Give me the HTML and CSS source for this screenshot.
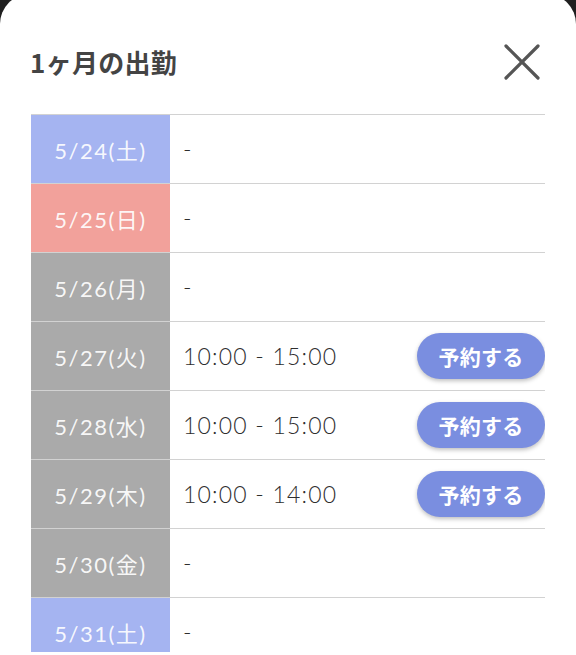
FILE: index.html
```html
<!DOCTYPE html>
<html lang="ja">
<head>
<meta charset="utf-8">
<link rel="stylesheet" href="styles.css">
</head>
<body>
<div class="panel">
  <div class="header">
    <h1 class="title">1ヶ月の出勤</h1>
    <svg class="close" width="40" height="40" viewBox="0 0 40 40" aria-label="閉じる">
      <path d="M4 4 L36 36 M36 4 L4 36" stroke="#555" stroke-width="3.2" stroke-linecap="round" fill="none"/>
    </svg>
  </div>
  <div class="list">
    <div class="row"><div class="date sat">5/24(土)</div><div class="info"><span class="time">-</span></div></div>
    <div class="row"><div class="date sun">5/25(日)</div><div class="info"><span class="time">-</span></div></div>
    <div class="row"><div class="date">5/26(月)</div><div class="info"><span class="time">-</span></div></div>
    <div class="row"><div class="date">5/27(火)</div><div class="info"><span class="time">10:00 - 15:00</span><button class="reserve">予約する</button></div></div>
    <div class="row"><div class="date">5/28(水)</div><div class="info"><span class="time">10:00 - 15:00</span><button class="reserve">予約する</button></div></div>
    <div class="row"><div class="date">5/29(木)</div><div class="info"><span class="time">10:00 - 14:00</span><button class="reserve">予約する</button></div></div>
    <div class="row"><div class="date">5/30(金)</div><div class="info"><span class="time">-</span></div></div>
    <div class="row"><div class="date sat">5/31(土)</div><div class="info"><span class="time">-</span></div></div>
  </div>
</div>
</body>
</html>
```
FILE: styles.css
```css
html, body {
  margin: 0;
  padding: 0;
  background: #1f1f1f;
  height: 655px;
  overflow: hidden;
}
.panel {
  margin-top: -6px;
  height: 661px;
  background: #fff;
  border-radius: 30px 30px 0 0;
  padding: 0 31px;
  box-sizing: border-box;
  font-family: "Noto Sans CJK JP", "Noto Sans", sans-serif;
}
.header {
  display: flex;
  align-items: center;
  justify-content: space-between;
  padding: 46px 0 30px;
  height: 44px;
}
.title {
  margin: 0 0 0 -1px;
  font-size: 26px;
  font-weight: 700;
  color: #444;
  line-height: 44px;
  letter-spacing: 0.3px;
}
.close {
  margin-right: 3px;
  display: block;
}
.list {
  height: 538px;
  overflow: hidden;
}
.row {
  display: flex;
  height: 69px;
  border-top: 1px solid #d2d2d2;
  box-sizing: border-box;
}
.date {
  width: 139px;
  flex: none;
  background: #aaaaaa;
  color: rgba(255,255,255,0.92);
  font-family: "Lato", "Noto Sans CJK JP", sans-serif;
  font-size: 22px;
  font-weight: 400;
  letter-spacing: 1.5px;
  display: flex;
  align-items: center;
  justify-content: center;
}
.date.sat { background: #a5b4f1; }
.date.sun { background: #f2a19b; }
.info {
  flex: 1;
  display: flex;
  align-items: center;
  justify-content: space-between;
  padding-left: 13px;
}
.time {
  font-family: "Lato", "Noto Sans CJK JP", sans-serif;
  font-size: 23px;
  font-weight: 300;
  letter-spacing: 1.2px;
  color: #2e2e2e;
}
.reserve {
  width: 128px;
  height: 46px;
  border: none;
  border-radius: 23px;
  background: #7a8ee0;
  color: #fff;
  font-family: "Noto Sans CJK JP", sans-serif;
  font-size: 21px;
  font-weight: 700;
  letter-spacing: 0.3px;
  box-shadow: 0 2px 4px rgba(0,0,0,0.25);
  padding: 0;
}
```
